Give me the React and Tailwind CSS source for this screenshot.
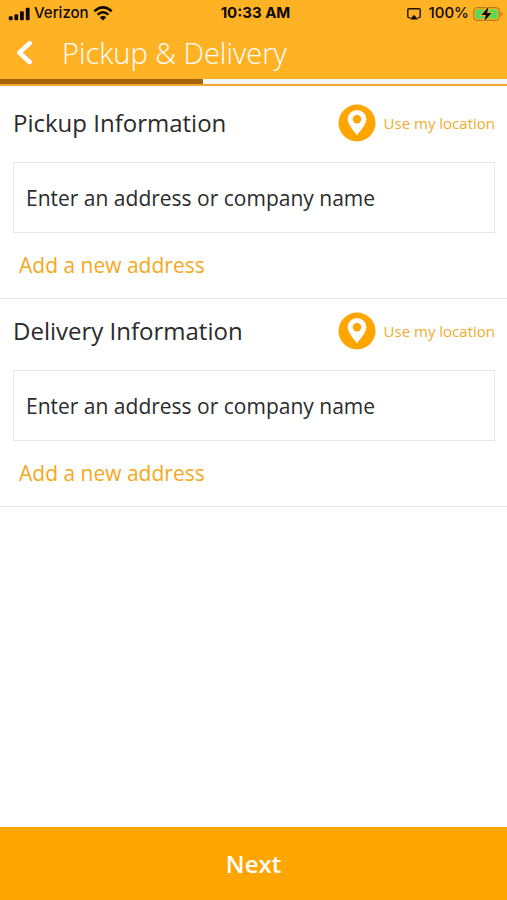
import { useState } from "react";

function SignalIcon() {
    return (
        <svg width="22" height="14" viewBox="0 0 22 14" fill="#0d0a02" aria-hidden="true">
            <rect x="0.8" y="9.2" width="3.8" height="4" rx="1" />
            <rect x="6.4" y="7.2" width="3.8" height="6" rx="1" />
            <rect x="12" y="4.2" width="3.8" height="9" rx="1" />
            <rect x="17.8" y="0.8" width="3.8" height="12.4" rx="1" />
        </svg>
    );
}

function WifiIcon() {
    return (
        <svg width="20" height="15" viewBox="0 0 18 14" fill="none" stroke="#0d0a02" aria-hidden="true">
            <path d="M0.9 4.9 Q9 -2.3 17.1 4.9" strokeWidth="2.4" />
            <path d="M3.9 8.1 Q9 3.6 14.1 8.1" strokeWidth="2.3" />
            <path d="M9 13.6 L5.9 10.5 Q9 8 12.1 10.5 Z" fill="#0d0a02" stroke="none" />
        </svg>
    );
}

function AirplayIcon() {
    return (
        <svg width="14" height="12" viewBox="0 0 14 12" fill="none" aria-hidden="true">
            <path
                d="M3.4 9.6 H1.8 Q0.8 9.6 0.8 8.6 V1.8 Q0.8 0.8 1.8 0.8 H12.2 Q13.2 0.8 13.2 1.8 V8.6 Q13.2 9.6 12.2 9.6 H10.6"
                stroke="#1c1503"
                strokeWidth="1.4"
            />
            <path d="M7 6.8 L11 11.6 H3 Z" fill="#0d0a02" />
        </svg>
    );
}

function BatteryIcon() {
    return (
        <svg width="30" height="16" viewBox="0 0 30 16" aria-hidden="true">
            <rect x="0.7" y="1.7" width="25.6" height="12.6" rx="3.6" fill="none" stroke="#b37c18" strokeWidth="1.2" />
            <path d="M27.6 5.8 Q29.6 6.6 29.6 8 Q29.6 9.4 27.6 10.2 Z" fill="#b37c18" />
            <rect x="2.4" y="3.4" width="22.2" height="9.2" rx="2" fill="#4fdc5c" />
            <path
                d="M15.6 0.8 L8.4 9 H12.8 L11.2 15.2 L18.6 6.9 H14.1 Z"
                fill="#0d0a02"
                stroke="#ffb224"
                strokeWidth="1.8"
                paintOrder="stroke"
            />
        </svg>
    );
}

function PinIcon() {
    return (
        <svg width="38" height="38" viewBox="0 0 38 38" aria-hidden="true">
            <circle cx="19" cy="19" r="18.5" fill="#ffa500" />
            <path
                d="M19 31.5 C17.6 29 9.6 20.6 9.6 15.3 A9.4 9.4 0 0 1 28.4 15.3 C28.4 20.6 20.4 29 19 31.5 Z"
                fill="#fff"
            />
            <circle cx="19" cy="15.3" r="4.2" fill="#ffa500" />
        </svg>
    );
}

function StatusBar() {
    return (
        <div className="grid grid-cols-3 items-center h-[27px] pl-2 pr-1 font-[Inter,sans-serif] text-[15px] text-[#0d0a02]">
            <div className="flex items-center gap-1">
                <SignalIcon />
                <span className="font-medium">Verizon</span>
                <WifiIcon />
            </div>
            <div className="text-center font-bold">10:33 AM</div>
            <div className="flex items-center justify-end gap-1">
                <AirplayIcon />
                <span className="pl-1 font-medium">100%</span>
                <BatteryIcon />
            </div>
        </div>
    );
}

function AddressSection({ id, title }) {
    const [address, setAddress] = useState("");

    return (
        <section className="border-b border-[#e6e6e6]">
            <div className="flex items-center justify-between h-16 pl-[13px] pr-3">
                <h2 className="text-[24px] text-[#2b2b2b]">
                    <label htmlFor={id}>{title}</label>
                </h2>
                <button type="button" className="flex items-center gap-2 text-[15px] text-[#efac2f]">
                    <PinIcon />
                    Use my location
                </button>
            </div>
            <div className="pt-[7px] pl-[13px] pr-3">
                <input
                    id={id}
                    type="text"
                    value={address}
                    onChange={(e) => setAddress(e.target.value)}
                    placeholder="Enter an address or company name"
                    className="block w-full h-[71px] px-3 border border-[#e6e6e6] text-[21px] text-[#2b2b2b] placeholder:text-[#2b2b2b] outline-none"
                />
            </div>
            <div className="flex items-center h-[65px] px-[19px]">
                <a href="#new-address" className="text-[21px] text-[#f5a81c]">
                    Add a new address
                </a>
            </div>
        </section>
    );
}

export default function App() {
    return (
        <div className="flex flex-col min-h-screen bg-white font-['Open_Sans',sans-serif]">
            <header className="bg-[#ffb224]">
                <StatusBar />
                <div className="flex items-center h-[52px] pl-4">
                    <button type="button" aria-label="Back">
                        <svg width="18" height="26" viewBox="0 0 18 26" fill="none" aria-hidden="true">
                            <path
                                d="M13.6 3.2 L3.4 12.6 L13.6 22"
                                stroke="#fff"
                                strokeWidth="4.6"
                                strokeLinecap="round"
                                strokeLinejoin="round"
                            />
                        </svg>
                    </button>
                    <h1 className="pl-7 text-[29px] font-light text-white">Pickup &amp; Delivery</h1>
                </div>
                <div className="h-[5px] bg-[#f3f8f6]">
                    <div className="w-2/5 h-full bg-[#a5630a]" />
                </div>
                <div className="h-[2px] bg-[#f0a72c]" />
            </header>

            <main className="flex-1 pt-[5px]">
                <AddressSection id="pickup" title="Pickup Information" />
                <AddressSection id="delivery" title="Delivery Information" />
            </main>

            <button type="button" className="h-[73px] bg-[#ffa500] text-[24px] font-semibold text-white">
                Next
            </button>
        </div>
    );
}
